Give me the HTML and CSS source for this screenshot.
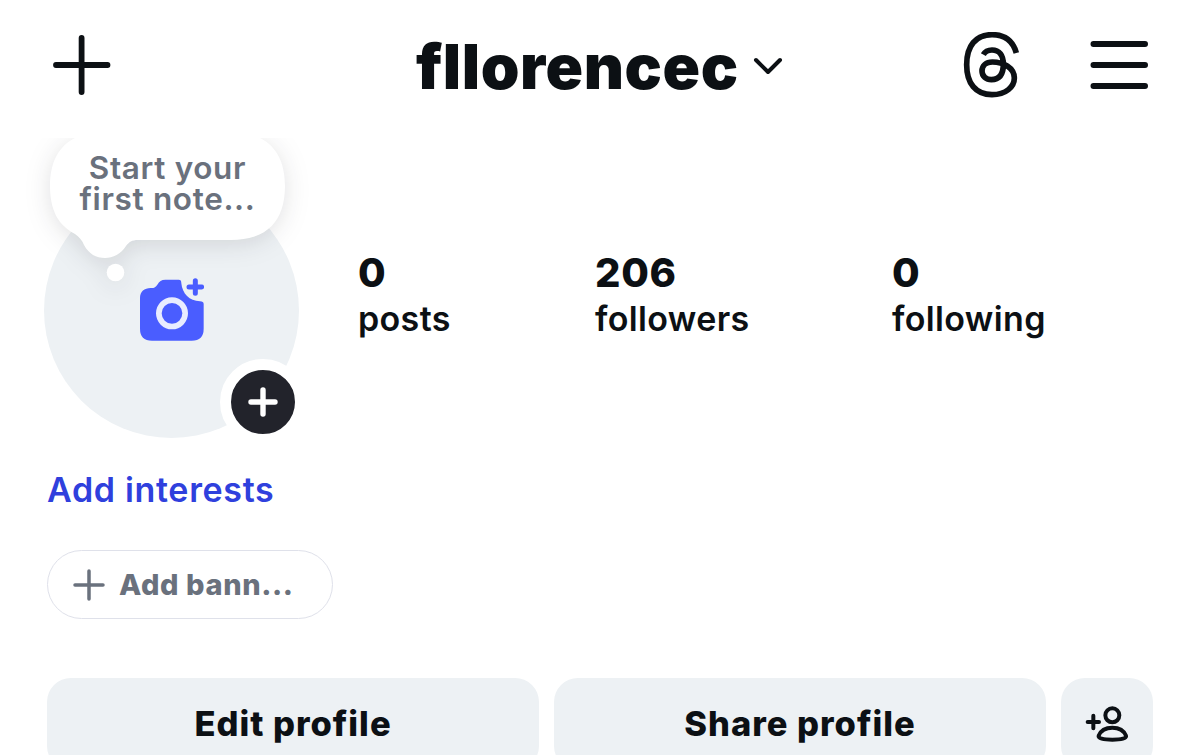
FILE: index.html
```
<!DOCTYPE html>
<html lang="en">
<head>
<meta charset="utf-8">
<title>fllorencec</title>
<link rel="stylesheet" href="styles.css">
</head>
<body>
<div class="screen">
  <header class="topbar">
    <svg class="icon-create" viewBox="0 0 58 60"><path d="M28.6 3V57M3 30H54.5" stroke-width="5.8"/></svg>
    <div class="account">
      <h1 class="username">fllorencec</h1>
      <svg class="icon-chevron" viewBox="0 0 30 20"><path d="M3 5L15 17L27 5" stroke-width="4"/></svg>
    </div>
    <svg class="icon-threads" viewBox="69 36 171 198"><path d="M229 99C219 63 194 44 156 44C107 44 80 78 80 134C80 190 107 224 156 224C198 224 223 200 223 174C223 143 190 126 157 126C138 126 126 137 126 153C126 169 139 179 154 179C178 179 190 163 190 133C190 106 178 90 156 90C143 90 135 95 130 104" stroke-width="17"/></svg>
    <svg class="icon-menu" viewBox="0 0 58 50"><path d="M3.5 4H55M3.5 25H55M3.5 46H55" stroke-width="6"/></svg>
  </header>

  <section class="summary">
    <div class="avatar">
      <svg class="icon-camera" viewBox="60 54 192 189">
        <path d="M60 114C60 95 73 84 92 84C104 84 107 81 112 74C118 64 124 59 136 59H176C182 59 184 62 184 70C187 101 208 123 240 124Q251 124 251 132V206Q251 242 215 242H96Q60 242 60 206Z" fill="#4a5dff"/>
        <circle cx="156" cy="160" r="39.5" fill="none" stroke="#e8ecff" stroke-width="17"/>
        <path d="M226 62V100M207 81H245" stroke="#4a5dff" stroke-width="15" stroke-linecap="round"/>
      </svg>
      <span class="badge"><svg class="icon-add" viewBox="0 0 30 30"><path d="M15 3V27M3 15H27" stroke-width="5.4"/></svg></span>
    </div>
    <div class="note">
      <svg class="note-shape" viewBox="20 138 300 160">
        <path d="M104 132H231C267 132 285 152 285 186C285 221 267 240 231 240H138C132 240 129 242 126 246C121 254 113 258 105 258C96 258 89 254 84 245C82 240 79 237 75 234C58 225 50 210 50 186C50 152 68 132 104 132Z"/>
        <circle cx="115.5" cy="272.5" r="8.8"/>
      </svg>
      <p class="note-text">Start your<br>first note...</p>
    </div>
    <div class="stats">
      <div class="stat"><strong class="count">0</strong><span class="label">posts</span></div>
      <div class="stat"><strong class="count">206</strong><span class="label">followers</span></div>
      <div class="stat"><strong class="count">0</strong><span class="label">following</span></div>
    </div>
  </section>

  <a class="interests">Add interests</a>
  <div class="banner">
    <svg class="icon-banner" viewBox="0 0 32 32"><path d="M16 2V30M2 16H30" stroke-width="3.5"/></svg>
    <span class="banner-text">Add bann...</span>
  </div>

  <div class="actions">
    <button class="action">Edit profile</button>
    <button class="action">Share profile</button>
    <button class="action"><svg class="icon-person" viewBox="198 122 132 108">
      <circle cx="280" cy="150" r="21"/>
      <path d="M239 211C245 196 259 187 280 187C301 187 315 196 321 211C324 219 307 223 280 223C253 223 236 219 239 211ZM223 151V189M206 170H240"/>
    </svg></button>
  </div>
</div>
</body>
</html>
```

FILE: styles.css
```
* { box-sizing: border-box; }

body {
  margin: 0;
  background: #fff;
  color: #0c1014;
  font-family: Inter, sans-serif;
}

.screen {
  width: 1200px;
  height: 755px;
  overflow: hidden;
}

svg { display: block; flex: none; }

.topbar {
  height: 138px;
  padding: 0 51px 8px 53px;
  display: flex;
  align-items: center;
}

.topbar path, .icon-add path, .icon-banner path {
  fill: none;
  stroke: #0c1014;
  stroke-linecap: round;
  stroke-linejoin: round;
}

.icon-create { width: 58px; height: 60px; }

.account {
  display: flex;
  align-items: center;
  margin-left: 305px;
  width: 547px;
  gap: 13px;
}

.username {
  margin: 0;
  padding-top: 3px;
  width: 324px;
  font-size: 62px;
  line-height: 74px;
  font-weight: 900;
  letter-spacing: 0.6px;
  white-space: nowrap;
}

.icon-chevron { width: 30px; height: 20px; }

.topbar .icon-threads { width: 57px; height: 66px; }
.topbar .icon-threads path { stroke-linecap: butt; }

.icon-menu { width: 58px; height: 50px; margin-left: 70px; }

.summary {
  position: relative;
  height: 316px;
  padding: 45px 0 0 44px;
  display: flex;
  overflow: hidden;
}

.avatar {
  position: relative;
  width: 255px;
  height: 255px;
  border-radius: 50%;
  background: #edf1f4;
  padding: 95px 0 0 96px;
  flex: none;
}

.icon-camera { width: 64px; height: 63px; }

.badge {
  position: absolute;
  left: 176.4px;
  top: 176px;
  width: 86px;
  height: 86px;
  border: 11px solid #fff;
  border-radius: 50%;
  background: #22232b;
  display: flex;
  align-items: center;
  justify-content: center;
}

.icon-add { width: 30px; height: 30px; }
.icon-add path { stroke: #fff; }

.note {
  position: absolute;
  left: 20px;
  top: 0;
  width: 300px;
  height: 160px;
}

.note-shape {
  width: 300px;
  height: 160px;
  fill: #fff;
  filter: drop-shadow(0 4px 12px rgba(20, 20, 30, 0.13));
}

.note-text {
  position: absolute;
  inset: 14px 5px auto 0;
  margin: 0;
  color: #6a717d;
  font-size: 31.5px;
  line-height: 31px;
  font-weight: 600;
  letter-spacing: 0.65px;
  text-align: center;
}

.stats {
  display: grid;
  grid-template-columns: 237px 297px auto;
  padding: 70px 0 0 59px;
  align-content: start;
}

.stat { display: flex; flex-direction: column; }

.count {
  font-size: 40px;
  line-height: 40px;
  font-weight: 800;
  letter-spacing: 0.7px;
}

.label {
  font-size: 34px;
  line-height: 42px;
  margin-top: 5px;
  font-weight: 600;
  letter-spacing: 0.35px;
}

.interests {
  display: block;
  height: 96px;
  padding: 15px 0 0 47px;
  color: #2f40dd;
  font-size: 34px;
  line-height: 42px;
  font-weight: 600;
  letter-spacing: 0.68px;
}

.banner {
  margin-left: 47px;
  width: 286px;
  height: 69px;
  border: 1.5px solid #dfe1ea;
  border-radius: 35px;
  padding-left: 25px;
  display: flex;
  align-items: center;
  gap: 14px;
}

.icon-banner { width: 32px; height: 32px; }
.icon-banner path { stroke: #6a717d; }

.banner-text {
  color: #6a717d;
  font-size: 29px;
  font-weight: 800;
  letter-spacing: 0.6px;
}

.actions {
  margin: 59px 47px 0;
  display: grid;
  grid-template-columns: 492px 492px 92px;
  gap: 15px;
}

.action {
  height: 92px;
  border: 0;
  border-radius: 24px;
  background: #edf1f4;
  color: #0c1014;
  font: 800 34.5px/42px Inter, sans-serif;
  letter-spacing: 1px;
  display: flex;
  align-items: center;
  justify-content: center;
}

.icon-person {
  width: 44px;
  height: 36px;
  fill: none;
  stroke: #0c1014;
  stroke-width: 12;
  stroke-linecap: round;
}
```
